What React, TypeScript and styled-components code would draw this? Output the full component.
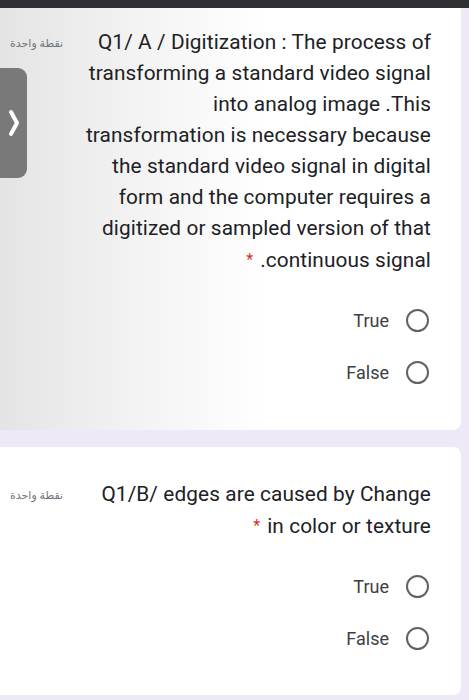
import React from "react";
import styled, { createGlobalStyle } from "styled-components";

const GlobalStyle = createGlobalStyle`
  html, body {
    margin: 0;
    padding: 0;
    background: #ede9f7;
  }
  body {
    font-family: Roboto, "Noto Sans", "Liberation Sans", sans-serif;
    color: #202124;
  }
`;

const TopBar = styled.div`
  height: 8px;
  background: #2f3033;
`;

const Feed = styled.div`
  display: flex;
  flex-direction: column;
  gap: 17px;
  padding-right: 8px;
  padding-bottom: 5px;
`;

const Card = styled.section<{ $shaded?: boolean; $top: number; $height: number }>`
  position: relative;
  box-sizing: border-box;
  height: ${({ $height }) => $height}px;
  padding: ${({ $top }) => $top}px 30px 0 10px;
  background: ${({ $shaded }) =>
    $shaded ? "linear-gradient(to right, #e4e4e4 0%, #f3f3f3 30%, #ffffff 58%)" : "#ffffff"};
  border-radius: ${({ $shaded }) => ($shaded ? "0 0 8px 0" : "0 8px 8px 0")};
  display: flex;
  flex-direction: column;
`;

const Header = styled.div`
  display: flex;
  align-items: flex-start;
  gap: 10px;
`;

const Points = styled.span`
  flex: none;
  margin-top: 8px;
  font-family: "Noto Sans", "DejaVu Sans", sans-serif;
  font-size: 11px;
  color: #70757a;
  direction: rtl;
`;

const Question = styled.div`
  flex: 1;
  text-align: right;
  font-size: 20.8px;
  line-height: 31px;
  letter-spacing: 0.1px;
`;

const Line = styled.span`
  display: block;
  white-space: nowrap;
`;

const Star = styled.span`
  color: #d93025;
  font-size: 16px;
  vertical-align: 2px;
  margin-right: 7px;
`;

const Options = styled.div`
  display: flex;
  flex-direction: column;
  gap: 22px;
  margin-top: 29px;
  padding-right: 2px;
`;

const Option = styled.label`
  display: flex;
  align-items: center;
  justify-content: flex-end;
  gap: 17px;
  height: 30px;
  font-size: 18px;
  color: #3c4043;
`;

const Radio = styled.span`
  box-sizing: border-box;
  width: 23px;
  height: 23px;
  border: 2px solid #5f6368;
  border-radius: 50%;
`;

const SideTab = styled.div`
  position: absolute;
  left: 0;
  top: 60px;
  width: 27px;
  height: 110px;
  background: #797979;
  border-radius: 0 9px 9px 0;
  display: flex;
  align-items: center;
  justify-content: center;
`;

type Q = { lines: string[]; starLine: string };

function QuestionCard({
  q,
  top,
  height,
  shaded,
  children,
}: React.PropsWithChildren<{ q: Q; top: number; height: number; shaded?: boolean }>) {
  return (
    <Card $top={top} $height={height} $shaded={shaded}>
      {children}
      <Header>
        <Points>نقطة واحدة</Points>
        <Question>
          {q.lines.map((l) => (
            <Line key={l}>{l}</Line>
          ))}
          <Line>
            <Star>*</Star>
            {q.starLine}
          </Line>
        </Question>
      </Header>
      <Options>
        <Option>
          True <Radio />
        </Option>
        <Option>
          False <Radio />
        </Option>
      </Options>
    </Card>
  );
}

const q1: Q = {
  lines: [
    "Q1/ A / Digitization : The process of",
    "transforming a standard video signal",
    "into analog image .This",
    "transformation is necessary because",
    "the standard video signal in digital",
    "form and the computer requires a",
    "digitized or sampled version of that",
  ],
  starLine: ".continuous signal",
};

const q2: Q = {
  lines: ["Q1/B/ edges are caused by Change"],
  starLine: "in color or texture",
};

export default function App() {
  return (
    <>
      <GlobalStyle />
      <TopBar />
      <Feed>
        <QuestionCard q={q1} top={19} height={422} shaded>
          <SideTab>
            <svg width="12" height="30" viewBox="0 0 12 30">
              <path d="M3 4 L9 15 L3 26" fill="none" stroke="#fff" strokeWidth="4" strokeLinecap="round" strokeLinejoin="round" />
            </svg>
          </SideTab>
        </QuestionCard>
        <QuestionCard q={q2} top={32} height={248} />
      </Feed>
    </>
  );
}
